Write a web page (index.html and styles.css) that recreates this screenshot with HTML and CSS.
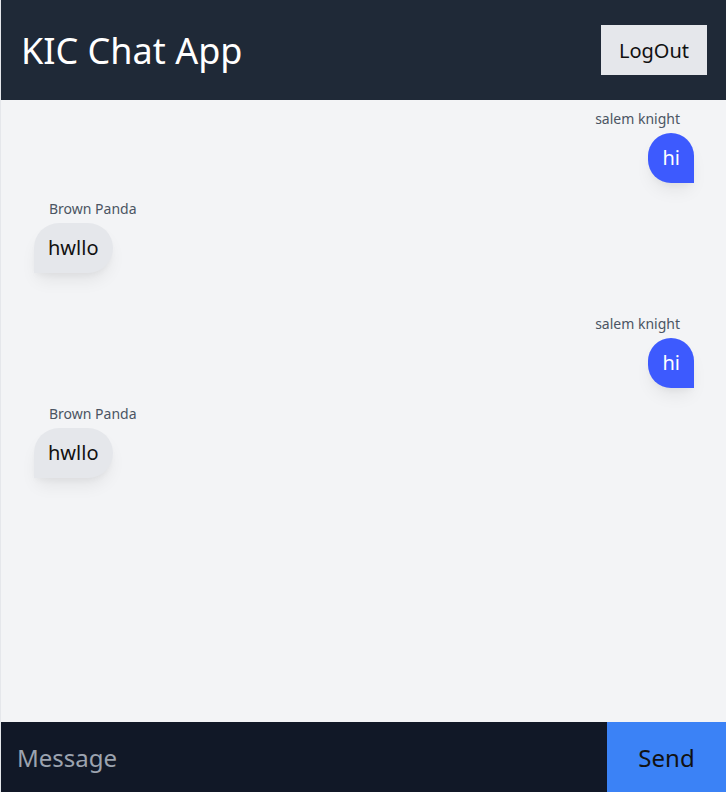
FILE: index.html
```html
<!DOCTYPE html>
<html>
<head>
<meta charset="utf-8">
<link rel="stylesheet" href="styles.css">
</head>
<body>
<div class="app">
  <header class="header">
    <h1 class="title">KIC Chat App</h1>
    <button class="logout">LogOut</button>
  </header>
  <main class="chat">
    <div class="msg sent">
      <div class="name">salem knight</div>
      <div class="bubble">hi</div>
    </div>
    <div class="msg recv">
      <div class="name">Brown Panda</div>
      <div class="bubble">hwllo</div>
    </div>
    <div class="msg sent">
      <div class="name">salem knight</div>
      <div class="bubble">hi</div>
    </div>
    <div class="msg recv">
      <div class="name">Brown Panda</div>
      <div class="bubble">hwllo</div>
    </div>
  </main>
  <form class="composer">
    <input class="input" type="text" placeholder="Message">
    <button class="send" type="button">Send</button>
  </form>
</div>
</body>
</html>
```
FILE: styles.css
```css
* { box-sizing: border-box; }
html, body { margin: 0; padding: 0; }
body {
  font-family: "Noto Sans", "Open Sans", sans-serif;
  background: #f3f4f6;
}
.app {
  height: 792px;
  display: flex;
  flex-direction: column;
  border-left: 1px solid #e5e7eb;
}
.header {
  height: 100px;
  background: #1f2937;
  display: flex;
  align-items: center;
  justify-content: space-between;
  padding: 0 19px 0 20px;
}
.title {
  margin: 0;
  color: #fff;
  font-size: 36px;
  font-weight: 400;
}
.logout {
  width: 106px;
  height: 50px;
  border: none;
  background: #e5e7eb;
  font-family: inherit;
  font-size: 20px;
  color: #111;
}
.chat {
  flex: 1;
  background: #f3f4f6;
  padding: 9px 32px 0 33px;
  display: flex;
  flex-direction: column;
}
.msg { display: flex; flex-direction: column; }
.msg.sent { align-items: flex-end; margin-bottom: 16px; }
.msg.recv { align-items: flex-start; margin-bottom: 41px; }
.name {
  font-size: 14px;
  color: #4b5563;
  line-height: 20px;
  padding: 0 14px 4px;
}
.bubble {
  font-size: 20px;
  line-height: 28px;
  padding: 11px 14px;
  border-radius: 25px;
  box-shadow: 0 10px 18px -4px rgba(0,0,0,0.08), 0 4px 6px -2px rgba(0,0,0,0.04);
}
.sent .bubble {
  background: #3d5afe;
  color: #fff;
  border-bottom-right-radius: 0;
}
.recv .bubble {
  background: #e5e7eb;
  color: #111;
  border-bottom-left-radius: 0;
}
.recv .name { padding-left: 15px; }
.composer {
  height: 70px;
  margin: 0;
  display: flex;
  background: #111827;
}
.input {
  flex: 1;
  background: #111827;
  border: none;
  outline: none;
  font-family: inherit;
  font-size: 24px;
  padding: 0 16px;
  color: #fff;
}
.input::placeholder { color: #9ca3af; }
.send {
  width: 119px;
  border: none;
  background: #3b82f6;
  font-family: inherit;
  font-size: 24px;
  color: #111;
}
```
